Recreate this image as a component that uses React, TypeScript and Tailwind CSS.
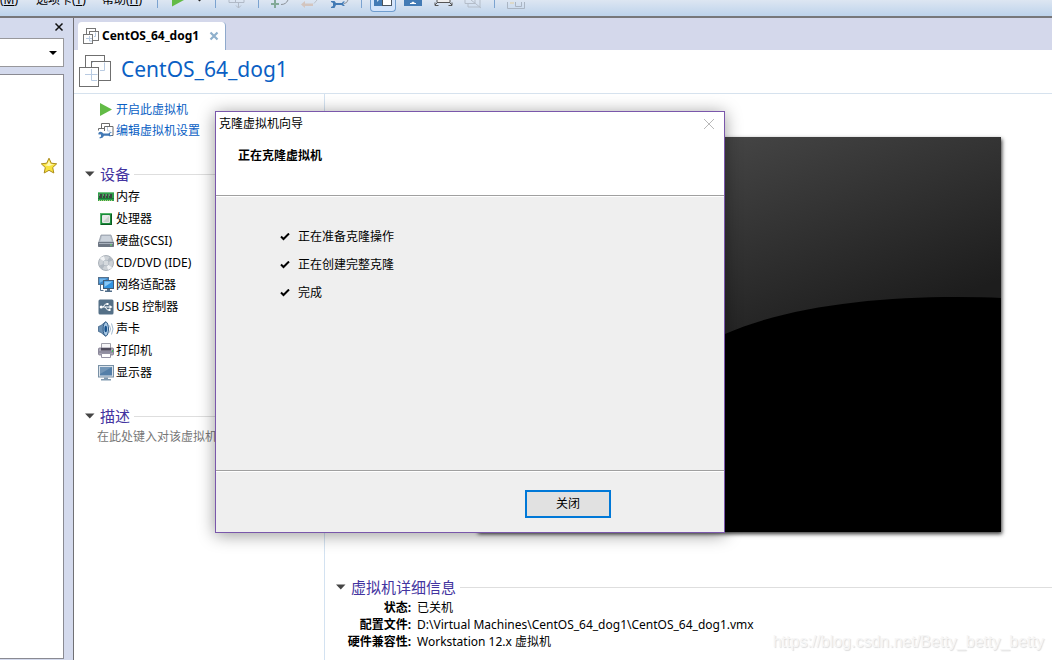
import React from "react";

const uiFont = "font-['Noto_Sans','Noto_Sans_CJK_SC',sans-serif]";

function MachineIcon() {
  return (
    <svg width="32" height="32" viewBox="0 0 32 32" fill="none" className="shrink-0" aria-hidden="true">
      <rect x="6.5" y="0.5" width="19" height="19" fill="#fff" stroke="#6f6f6f" />
      <rect x="12.5" y="6.5" width="19" height="19" fill="#fff" stroke="#6f6f6f" />
      <path d="M25.500 7.500v8H21" stroke="#b9cbe2" />
      <rect x="0.5" y="12.5" width="19" height="19" fill="#fff" stroke="#6f6f6f" />
      <path d="M12.500 14v11.500h5.500M6 19.500h12.500M14 7.500h-1" stroke="#b9cbe2" />
    </svg>
  );
}

function SmallMachineIcon() {
  return (
    <svg width="17" height="17" viewBox="0 0 17 17" fill="none" className="shrink-0" aria-hidden="true">
      <rect x="3.500" y="0.500" width="9" height="10" fill="#fff" stroke="#777" />
      <rect x="6.500" y="3.500" width="9" height="9" fill="#fff" stroke="#777" />
      <path d="M12.500 4.500v4H11" stroke="#b9cbe2" />
      <rect x="0.500" y="6.500" width="9" height="9" fill="#fff" stroke="#777" />
      <path d="M6.500 8v5H9M3 10.500h6" stroke="#b9cbe2" />
    </svg>
  );
}

function PlayIcon() {
  return (
    <svg width="16" height="16" viewBox="0 0 16 16" className="shrink-0" aria-hidden="true">
      <path d="M2 1 14 7.500 2 14Z" fill="#62bb46" />
    </svg>
  );
}

function SettingsIcon() {
  return (
    <svg width="16" height="16" viewBox="0 0 16 16" fill="none" className="shrink-0" aria-hidden="true">
      <path d="M3.500 6V.5h8V3M.5 7.500v-2h6M6.500 8V3.500h8.500v9h-2" stroke="#6c6c6c" />
      <path d="M9.500 4v4h3" stroke="#b9cbe2" />
      <path
        d="M1 9.200Q3.500 8 5.500 10.500h5Q11.500 8.500 14 9l-2 1.500v1.500l2.500.500Q12.500 14 10.500 12.800H6Q5 16 1 15l2-1.500v-2H.5Q0 10 1 9.200Z"
        fill="#4279b5"
      />
    </svg>
  );
}

function MemoryIcon() {
  return (
    <svg width="16" height="16" viewBox="0 0 16 16" aria-hidden="true">
      <path d="M0 3h16v9H0Z" fill="#2f9e4c" />
      <path d="M0 3h16v1H0Z" fill="#73c583" />
      <path d="M1 5h3v4H1zM5 5h2v4H5zM8 5h2v4H8zM11 5h3v4h-3z" fill="#3a4740" />
      <path d="M1 5h1v2H1zM5 5h1v2H5zM8 5h1v2H8zM11 5h1v2h-1z" fill="#748078" />
      <path d="M0 9h16v1H0z" fill="#187a34" />
      <path d="M1 11h1v1H1zM3 11h1v1H3zM5 11h1v1H5zM7 11h1v1H7zM9 11h1v1H9zM11 11h1v1h-1zM13 11h1v1h-1z" fill="#b7d67c" />
    </svg>
  );
}

function CpuIcon() {
  return (
    <svg width="16" height="16" viewBox="0 0 16 16" aria-hidden="true">
      <rect x="2" y="2" width="12" height="12" fill="#1c8b3c" />
      <path d="M2 2h12v1H3v11H2z" fill="#53b568" />
      <path d="M13 3h1v11H3v-1h10z" fill="#0b5c22" />
      <rect x="4" y="4" width="8" height="8" rx="1" fill="#e6e9e7" />
      <path d="M5 11 11 5v6z" fill="#ccd3ce" />
    </svg>
  );
}

function DiskIcon() {
  return (
    <svg width="16" height="16" viewBox="0 0 16 16" aria-hidden="true">
      <path d="M3 2h10l2.500 8H.5Z" fill="#b6bec9" stroke="#8a929d" strokeWidth="0.700" />
      <path d="M4 3h8l1.500 5H2.500Z" fill="#ccd3dc" />
      <rect x="0" y="9" width="16" height="5" rx="0.800" fill="#6d7683" />
      <path d="M1 10h14v1H1z" fill="#a8b1bd" />
      <path d="M12 11.500h2v1h-2z" fill="#65e06d" />
    </svg>
  );
}

function DiscIcon() {
  return (
    <svg width="16" height="16" viewBox="0 0 16 16" aria-hidden="true">
      <circle cx="8" cy="8" r="7.500" fill="#ccd1d6" stroke="#9ba3ac" strokeWidth="0.800" />
      <path d="M8 8 2 3.500A7 7 0 0 1 6 1.200ZM8 8l6 4.500a7 7 0 0 1-4 2.300Z" fill="#f1f3f5" />
      <path d="M8 8 11.500 2A7 7 0 0 1 14.500 5.500ZM8 8 4.500 14A7 7 0 0 1 1.500 10.500Z" fill="#b0b8c0" />
      <circle cx="8" cy="8" r="2.800" fill="#e7ebee" stroke="#9ba5af" strokeWidth="0.600" />
      <circle cx="8" cy="8" r="1.200" fill="#fff" stroke="#929ca7" strokeWidth="0.500" />
    </svg>
  );
}

function NetworkIcon() {
  return (
    <svg width="16" height="16" viewBox="0 0 16 16" aria-hidden="true">
      <rect x="0.500" y="0.500" width="10" height="7" fill="#3785c9" stroke="#56718c" />
      <path d="M1.500 1.500h8L1.500 6Z" fill="#75b5e7" />
      <path d="M2.500 8v5.500h3" stroke="#56718c" fill="none" />
      <rect x="5" y="3" width="11" height="9" fill="#fff" />
      <rect x="5.500" y="3.500" width="10" height="8" fill="#3193e0" stroke="#3f5d7a" />
      <path d="M6.500 4.500h8l-8 5.500Z" fill="#8cc9f6" />
      <path d="M9 12h3v1.500h2V15H7v-1.500h2z" fill="#526e8a" />
    </svg>
  );
}

function UsbIcon() {
  return (
    <svg width="16" height="16" viewBox="0 0 16 16" fill="none" aria-hidden="true">
      <rect x="0.500" y="0.500" width="15" height="15" rx="1.500" fill="#557087" />
      <path d="M3 8h9M5 8l2.500-3H9M7 8l2.500 3H11" stroke="#fff" />
      <circle cx="3.200" cy="8" r="1.500" fill="#fff" />
      <path d="m11.500 6 3 2-3 2zM8.500 4h2v2h-2zM10.500 10h2v2h-2z" fill="#fff" />
    </svg>
  );
}

function SoundIcon() {
  return (
    <svg width="16" height="16" viewBox="0 0 16 16" fill="none" aria-hidden="true">
      <path d="M.5 5.500 3 4.500 7.500.800v14.400L3 11.500.5 10.500Z" fill="#6b91b5" stroke="#3d6286" strokeWidth="0.800" />
      <ellipse cx="7.800" cy="8" rx="2.700" ry="7" fill="#a8c9e6" stroke="#315b85" />
      <ellipse cx="7.700" cy="8" rx="1.300" ry="3.300" fill="#17518c" />
      <path d="M11.500 4.500q2 3.500 0 7M13.500 2.500q3 5.500 0 11" stroke="#a1b9cf" />
    </svg>
  );
}

function PrinterIcon() {
  return (
    <svg width="16" height="16" viewBox="0 0 16 16" aria-hidden="true">
      <path d="M3.500.5h9v5h-9z" fill="#f5f5f7" stroke="#a0a0aa" />
      <rect x="0.500" y="5" width="15" height="7" rx="1" fill="#aaa8b5" stroke="#78758a" strokeWidth="0.800" />
      <path d="M3 5h10v2.500H3z" fill="#4e4b5b" />
      <path d="M1 8.500h14v1H1z" fill="#77748a" />
      <path d="M3.500 10.500h9v4h-9z" fill="#fff" stroke="#9694a5" />
      <path d="M14 7h1v2h-1z" fill="#41c957" />
    </svg>
  );
}

function DisplayIcon() {
  return (
    <svg width="16" height="16" viewBox="0 0 16 16" aria-hidden="true">
      <rect x="0.500" y="0.500" width="15" height="11.500" fill="#dbe3eb" stroke="#7890a5" />
      <rect x="2" y="2" width="12" height="8.500" fill="#547fa8" />
      <path d="M2 2h12L2 9Z" fill="#7396b7" />
      <path d="M6 12.500h4v1.500h3v1.500H3V14h3z" fill="#8099af" />
    </svg>
  );
}

const devices: { label: string; icon: React.ReactNode }[] = [
  { label: "内存", icon: <MemoryIcon /> },
  { label: "处理器", icon: <CpuIcon /> },
  { label: "硬盘(SCSI)", icon: <DiskIcon /> },
  { label: "CD/DVD (IDE)", icon: <DiscIcon /> },
  { label: "网络适配器", icon: <NetworkIcon /> },
  { label: "USB 控制器", icon: <UsbIcon /> },
  { label: "声卡", icon: <SoundIcon /> },
  { label: "打印机", icon: <PrinterIcon /> },
  { label: "显示器", icon: <DisplayIcon /> },
];

const details = [
  ["状态:", "已关机"],
  ["配置文件:", "D:\\Virtual Machines\\CentOS_64_dog1\\CentOS_64_dog1.vmx"],
  ["硬件兼容性:", "Workstation 12.x 虚拟机"],
];

const steps = ["正在准备克隆操作", "正在创建完整克隆", "完成"];

function Separator() {
  return <span className="h-2 w-px shrink-0 bg-[#7ba3d0]" />;
}

function ToolButton({ label, children }: { label: string; children: React.ReactNode }) {
  return (
    <button type="button" aria-label={label} className="w-5 shrink-0">
      <svg width="20" height="16" viewBox="0 0 20 16" fill="none" aria-hidden="true">
        {children}
      </svg>
    </button>
  );
}

function Toolbar() {
  return (
    <header className="flex h-[18px] shrink-0 items-start overflow-hidden border-b-2 border-[#77777a] bg-linear-to-b from-[#dde6f2] to-[#bdd3eb]">
      <nav className="-mt-2 flex h-4 w-[157px] shrink-0 text-xs leading-4 whitespace-nowrap">
        <a href="#vm" className="w-9 shrink-0 text-black">(<u>M</u>)</a>
        <a href="#tabs" className="w-[66px] shrink-0 text-black">选项卡(<u>T</u>)</a>
        <a href="#help" className="text-black">帮助(<u>H</u>)</a>
      </nav>
      <Separator />
      <div className="flex w-[57px] justify-center">
        <button type="button" aria-label="开机" className="h-4 w-8">
          <svg width="32" height="16" viewBox="0 0 32 16" aria-hidden="true">
            <path d="M1 0h12L1 6.500Z" fill="#62bb46" />
            <path d="M27 0h3l-1.500 1.500Z" fill="#222" />
          </svg>
        </button>
      </div>
      <Separator />
      <div className="flex w-[42px] justify-center">
        <ToolButton label="发送按键">
          <path d="M2 0v2.500h15V0M8.500 0v2.500M11.500 3v5M9 5.500 11.500 8 14 5.500" stroke="#b1bac7" />
        </ToolButton>
      </div>
      <Separator />
      <div className="flex w-[102px] justify-center gap-2.5">
        <ToolButton label="拍摄快照">
          <path d="M11 4.500q5 0 7-4.500" stroke="#8c9299" />
          <path d="M1 4h8M5 0v8" stroke="#83aa98" strokeWidth="2" />
        </ToolButton>
        <ToolButton label="恢复快照">
          <path d="M14 3.500 17 0" stroke="#bbc1c9" />
          <path d="m1 4.500 4-3.500v2.500h8v2.500H5V8Z" fill="#d3c5bf" />
        </ToolButton>
        <ToolButton label="管理快照">
          <path d="M14 3.500q3 0 4-3.500" stroke="#8c9299" />
          <path d="M1 1h3.500L6 3h6l1-1.500h2L13.500 3v1.500L15 6h-2l-1.500-1H6L4.500 8H1V7l2-1V3L1 2Z" fill="#437bb5" />
        </ToolButton>
      </div>
      <Separator />
      <button type="button" aria-label="显示库" aria-pressed="true" className="ml-2 h-3 w-[26px] shrink-0 rounded-b-sm border border-t-0 border-[#709dce] bg-[#d3e4fb]">
        <svg width="24" height="11" viewBox="0 0 24 11" aria-hidden="true">
          <path d="M3 0h18v6H3z" fill="#4b555f" />
          <path d="M3 0h8v6H3z" fill="#437bb5" />
          <path d="M12 0h8v5h-8z" fill="#fff" />
          <path d="M6 0h2L6 2z" fill="#cfe3f5" />
        </svg>
      </button>
      <div className="ml-2 flex w-[90px] gap-2.5">
        <ToolButton label="缩略图栏">
          <path d="M0 0h18v6H0z" fill="#437bb5" />
          <path d="M6 4h6v-1h-1l-2-1.500L7 3H6z" fill="#fff" />
        </ToolButton>
        <ToolButton label="全屏">
          <path d="M3 0v2.500h13V0" stroke="#555" fill="#eee" />
          <path d="M4 2 1 5M1 2.500v3h3.500M15 2l3 3M18 2.500v3h-3.500" stroke="#555" />
        </ToolButton>
        <ToolButton label="Unity">
          <path d="M1 0v3.500h10V0M4 3v4h12V0M7 0l10 8" stroke="#b4bdc9" />
        </ToolButton>
      </div>
      <Separator />
      <div className="ml-3">
        <ToolButton label="控制台视图">
          <path d="M.5 0v6.500h17V0M8.500 0v4.500h6V0" stroke="#aab5c3" />
          <path d="M3 0h4v2H3z" fill="#ddd9c8" />
        </ToolButton>
      </div>
    </header>
  );
}

function Sidebar() {
  return (
    <aside className="flex w-[73px] shrink-0 flex-col bg-[#d4daed]">
      <div className="flex h-5 items-center justify-end pr-1.5">
        <button type="button" aria-label="关闭库" className="size-4">
          <svg width="16" height="16" viewBox="0 0 16 16" aria-hidden="true">
            <path d="m4.500 3.500 7 7M11.500 3.500l-7 7" stroke="#111" strokeWidth="1.500" />
          </svg>
        </button>
      </div>
      <button type="button" aria-label="搜索" className="mr-[9px] flex h-[29px] shrink-0 items-center justify-end border border-l-0 border-[#98989c] bg-white pr-1.5">
        <svg width="8" height="4" viewBox="0 0 8 4" aria-hidden="true">
          <path d="M0 0h8L4 4Z" fill="#000" />
        </svg>
      </button>
      <div className="mt-[7px] mr-[9px] mb-px flex-1 border border-l-0 border-[#8a8a92] bg-white pt-[82px]">
        <button type="button" aria-label="收藏" className="ml-10 block">
          <svg width="18" height="18" viewBox="0 0 18 18" aria-hidden="true">
            <path d="m9 1.200 2.300 5 5.400.600-4 3.700 1.100 5.500L9 13.300 4.200 16l1.100-5.500-4-3.700 5.400-.600Z" fill="#f8e33f" stroke="#ad8d1c" strokeLinejoin="round" />
            <path d="M9 3.500 10.500 7l3.500.5-5 1.500-4-.500 2.500-1.500Z" fill="#fff9ba" />
          </svg>
        </button>
      </div>
    </aside>
  );
}

function SectionHeading({ children }: { children: React.ReactNode }) {
  return (
    <div className="flex h-5 items-center">
      <svg width="10" height="6" viewBox="0 0 10 6" className="mr-[5px] shrink-0" aria-hidden="true">
        <path d="M0 .5h9.500L4.800 5.500Z" fill="#454545" />
      </svg>
      <h2 className="mr-1 text-[15px] leading-5 whitespace-nowrap text-[#4334a0]">{children}</h2>
      <span className="h-px flex-1 bg-[#dedede]" />
    </div>
  );
}

function MachinePanel() {
  return (
    <section className="w-[251px] shrink-0 border-r border-[#d3e2f1]">
      <div className="pt-[5px] pl-6">
        <button type="button" className="flex h-[21px] items-center gap-0.5 text-xs text-[#0a5fc4]">
          <PlayIcon />
          开启此虚拟机
        </button>
        <button type="button" className="flex h-[21px] items-center gap-0.5 text-xs text-[#0a5fc4]">
          <SettingsIcon />
          编辑虚拟机设置
        </button>
      </div>
      <div className="mt-[23px] pl-[11px]">
        <SectionHeading>设备</SectionHeading>
      </div>
      <ul className="mt-0.5 pl-6">
        {devices.map((d) => (
          <li key={d.label}>
            <button type="button" className="flex h-[22px] items-center gap-0.5 text-xs text-black">
              {d.icon}
              {d.label}
            </button>
          </li>
        ))}
      </ul>
      <div className="mt-[22px] pl-[11px]">
        <SectionHeading>描述</SectionHeading>
      </div>
      <input
        type="text"
        aria-label="描述"
        placeholder="在此处键入对该虚拟机的描述。"
        className="ml-[23px] block h-5 w-52 text-xs placeholder:text-[#777]"
      />
    </section>
  );
}

function Preview() {
  return (
    <div className="mr-[51px] ml-auto w-[524px] shadow-[1px_2px_4px_rgba(0,0,0,0.8)]">
      <svg viewBox="0 0 524 395" className="block w-full" aria-hidden="true">
        <defs>
          <linearGradient id="screen" gradientUnits="userSpaceOnUse" x1="248" y1="0" x2="332" y2="217">
            <stop offset="0" stopColor="#454545" />
            <stop offset="1" stopColor="#1d1d1d" />
          </linearGradient>
        </defs>
        <path d="M0 0h524v395H0z" fill="url(#screen)" />
        <path d="M0 395V340Q110 250 248 197C310 170 395 160 480 160Q505 160 524 161V395Z" fill="#000" />
      </svg>
    </div>
  );
}

function CloneDialog() {
  return (
    <div
      role="dialog"
      aria-labelledby="wizard-title"
      className="absolute top-[111px] left-[215px] flex h-[422px] w-[510px] flex-col border border-[#7a57ab] bg-[#efefef] text-xs text-black shadow-[0_2px_16px_rgba(0,0,0,0.4)]"
    >
      <div className="h-[84px] border-b border-[#a0a0a0] bg-white">
        <div className="flex h-6 items-center justify-between pr-[7px] pl-[3px]">
          <h1 id="wizard-title">克隆虚拟机向导</h1>
          <button type="button" aria-label="关闭" className="size-4">
            <svg width="16" height="16" viewBox="0 0 16 16" aria-hidden="true">
              <path d="m3 3 10 10M13 3 3 13" stroke="#b9b9b9" />
            </svg>
          </button>
        </div>
        <h2 className="mt-3 ml-[22px] leading-4 font-bold">正在克隆虚拟机</h2>
      </div>
      <ul className="flex-1 border-t border-white pt-[26px] pl-16">
        {steps.map((s) => (
          <li key={s} className="flex h-7 items-center gap-2">
            <svg width="10" height="8" viewBox="0 0 10 8" aria-hidden="true">
              <path d="m1 3.500 2.500 2.500L9 .5" stroke="#000" strokeWidth="2" fill="none" />
            </svg>
            {s}
          </li>
        ))}
      </ul>
      <div className="flex h-[62px] justify-end border-t border-[#a0a0a0] pr-[113px] inset-shadow-[0_1px_0_#fff]">
        <div className="pt-[19px]">
          <button type="button" className="h-7 w-[86px] border-2 border-[#0078d7] bg-[#e1e1e1]">关闭</button>
        </div>
      </div>
    </div>
  );
}

export default function App() {
  return (
    <div className={`relative flex h-screen flex-col overflow-hidden bg-white text-black ${uiFont}`}>
      <Toolbar />
      <div className="flex min-h-0 flex-1">
        <Sidebar />
        <main className="flex min-w-0 flex-1 flex-col border-l border-[#707074]">
          <div className="flex h-8 shrink-0 items-end bg-[#d4d8eb] pl-1">
            <div className="flex h-7 w-[148px] items-center rounded-t border-r border-[#8fa9cc] bg-white pl-[5px]">
              <SmallMachineIcon />
              <span className="ml-0.5 text-xs font-bold">CentOS_64_dog1</span>
              <button type="button" aria-label="关闭标签" className="mr-1.5 ml-auto">
                <svg width="10" height="10" viewBox="0 0 10 10" aria-hidden="true">
                  <path d="m1.500 1.500 7 7M8.500 1.500l-7 7" stroke="#8fb0cc" strokeWidth="2.200" />
                </svg>
              </button>
            </div>
          </div>
          <div className="flex h-11 shrink-0 items-start border-b border-[#d6e2ee] pt-[5px] pl-[5px]">
            <MachineIcon />
            <h1 className="ml-2.5 text-[21px] leading-7 text-[#0a5fc4]">CentOS_64_dog1</h1>
          </div>
          <div className="flex min-h-0 flex-1">
            <MachinePanel />
            <section className="min-w-0 flex-1 pt-[43px]">
              <Preview />
              <div className="mt-[45px] pl-[11px]">
                <SectionHeading>虚拟机详细信息</SectionHeading>
                <dl className="mt-0.5 grid grid-cols-[75px_1fr] gap-x-1.5 text-xs leading-[17px]">
                  {details.map(([k, v]) => (
                    <React.Fragment key={k}>
                      <dt className="text-right font-bold whitespace-nowrap">{k}</dt>
                      <dd className="whitespace-nowrap">{v}</dd>
                    </React.Fragment>
                  ))}
                </dl>
              </div>
            </section>
          </div>
        </main>
      </div>
      <CloneDialog />
      <p className="absolute right-2 bottom-2 font-['Liberation_Sans',sans-serif] text-base leading-5 text-[#f6f6f6] [text-shadow:1px_1px_1px_#dcdcdc]">
        https://blog.csdn.net/Betty_betty_betty
      </p>
    </div>
  );
}
